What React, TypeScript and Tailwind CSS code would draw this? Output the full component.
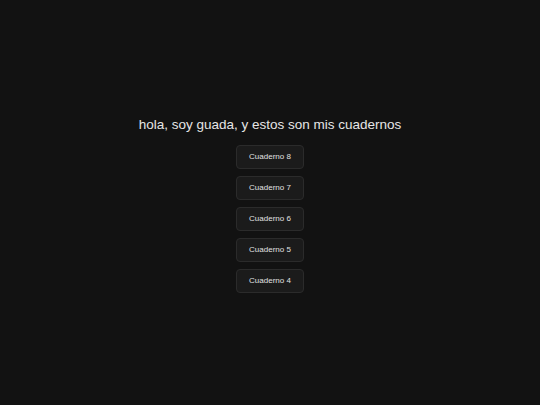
export default function App() {
  const items = ["Cuaderno 8", "Cuaderno 7", "Cuaderno 6", "Cuaderno 5", "Cuaderno 4"];
  return (
    <div className="h-[405px] w-full bg-[#121212] flex flex-col items-center justify-center pt-[5px]" style={{ fontFamily: '"Liberation Sans", Arial, sans-serif' }}>
      <h1 className="text-[13.5px] leading-[16px] text-[#e6e6e6] mb-[12px]">hola, soy guada, y estos son mis cuadernos</h1>
      <div className="flex flex-col items-center gap-[7px]">
        {items.map((t) => (
          <button key={t} className="w-[68px] h-[24px] rounded-[4px] border border-[#2b2b2b] bg-[#1b1b1b] text-[8px] text-[#e0e0e0] flex items-center justify-center">
            {t}
          </button>
        ))}
      </div>
    </div>
  );
}
